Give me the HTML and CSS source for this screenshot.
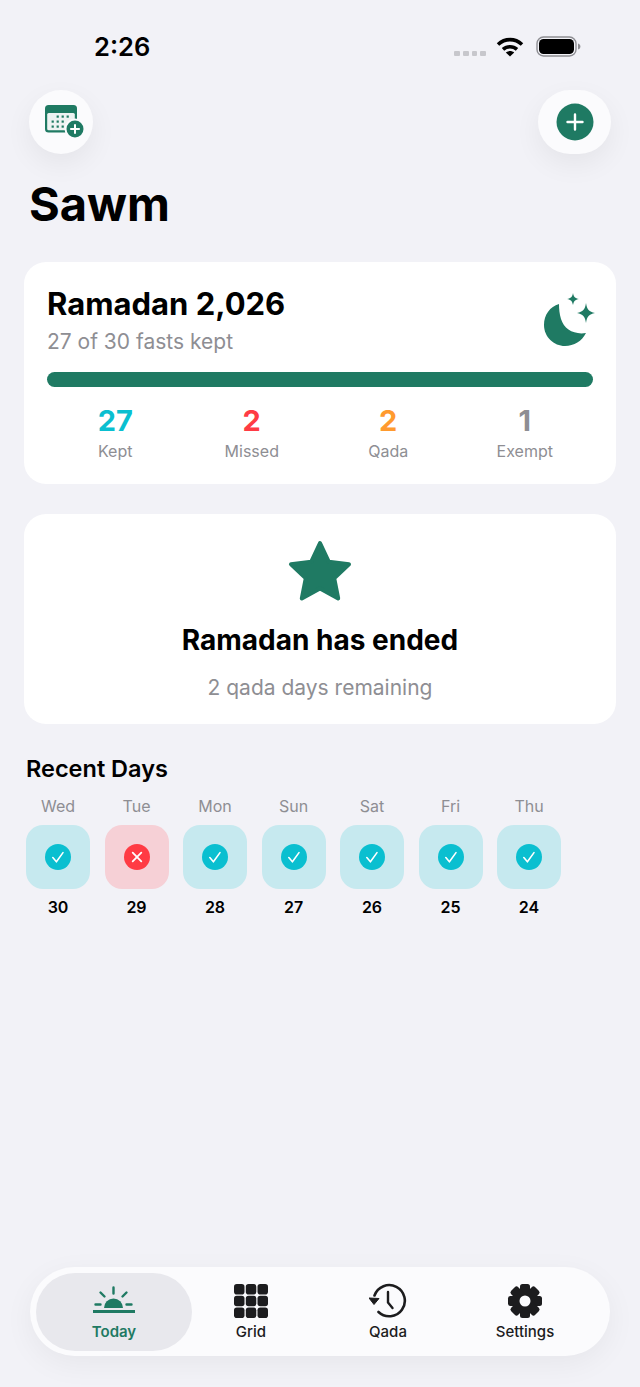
FILE: index.html
```html
<!DOCTYPE html>
<html lang="en">
<head>
  <meta charset="UTF-8" />
  <meta name="viewport" content="width=device-width, initial-scale=1.0" />
  <title>Sawm</title>
  <link rel="stylesheet" href="styles.css">
</head>
<body>
  <svg class="sprites" width="0" height="0">
    <symbol id="check" viewBox="0 0 26 26">
      <circle cx="13" cy="13" r="13" fill="#0abfd0"/>
      <path d="M7.8 13.6L11.4 17.8L18 8.6" stroke="#fff" stroke-width="1.6" fill="none" stroke-linecap="round" stroke-linejoin="round"/>
    </symbol>
    <symbol id="cross" viewBox="0 0 26 26">
      <circle cx="13" cy="13" r="13" fill="#ff3b44"/>
      <path d="M8.7 8.7L17.3 17.3M17.3 8.7L8.7 17.3" stroke="#fff" stroke-width="1.8" fill="none" stroke-linecap="round"/>
    </symbol>
  </svg>

  <div class="page">
    <div class="status-bar">
      <span class="time">2:26</span>
      <div class="status-icons">
        <div class="signal"><i></i><i></i><i></i><i></i></div>
        <svg class="wifi" width="28" height="20" viewBox="0 0 28 20">
          <path d="M2 7.5C9 1 19 1 26 7.5" fill="none" stroke="#000" stroke-width="3.6"/>
          <path d="M7 12.4C11 8.8 17 8.8 21 12.4" fill="none" stroke="#000" stroke-width="3.6"/>
          <path d="M9.8 15.4C12.4 13.4 15.6 13.4 18.2 15.4L14 19.6Z" fill="#000"/>
        </svg>
        <svg class="battery" width="45" height="21" viewBox="0 0 45 21">
          <rect x="1" y="1" width="39" height="19" rx="6.5" fill="none" stroke="#8e8e93" stroke-width="1.4"/>
          <rect x="3" y="3" width="35" height="15" rx="4.6" fill="#000"/>
          <path d="M42 7.5C43.6 8 44.4 9 44.4 10.5S43.6 13 42 13.5Z" fill="#8e8e93"/>
        </svg>
      </div>
    </div>

    <div class="top-actions">
      <button class="round-btn calendar-btn">
        <svg width="40" height="36" viewBox="0 0 40 36">
          <rect x="1" y="1" width="32" height="27.500" rx="3.5" fill="#1f7a63"/>
          <rect x="3.2" y="9" width="27.600" height="17.300" rx="1.5" fill="#eef3f2"/>
          <g fill="#1f7a63">
            <rect x="12.600" y="11.500" width="2.200" height="2.200"/><rect x="17.600" y="11.500" width="2.200" height="2.200"/><rect x="22.600" y="11.500" width="2.200" height="2.200"/>
            <rect x="7.600" y="16.500" width="2.200" height="2.200"/><rect x="12.600" y="16.500" width="2.200" height="2.200"/><rect x="17.600" y="16.500" width="2.200" height="2.200"/>
            <rect x="7.600" y="21.500" width="2.200" height="2.200"/><rect x="12.600" y="21.500" width="2.200" height="2.200"/><rect x="17.600" y="21.500" width="2.200" height="2.200"/>
          </g>
          <circle cx="31" cy="25" r="9.500" fill="#1f7a63" stroke="#fbfbfd" stroke-width="2"/>
          <path d="M31 20.200V29.800M26.200 25H35.800" stroke="#fff" stroke-width="2" fill="none"/>
        </svg>
      </button>
      <button class="round-btn add-btn">
        <svg width="38" height="38" viewBox="0 0 38 38">
          <circle cx="19" cy="19" r="18.500" fill="#1f7a63"/>
          <path d="M19 11.500V26.500M11.500 19H26.500" stroke="#fff" stroke-width="2.400" stroke-linecap="round" fill="none"/>
        </svg>
      </button>
    </div>

    <h1 class="page-title">Sawm</h1>

    <main class="content">
      <section class="card summary">
        <div class="summary-head">
          <div>
            <h2>Ramadan 2,026</h2>
            <p class="muted">27 of 30 fasts kept</p>
          </div>
          <svg class="moon" width="56" height="58" viewBox="0 0 56 58">
            <path d="M15 13C6 15.500 0 24 0 34C0 46 10 55 21 55C30 55 38 50 42 42C30 44 20 38 17 28C15.500 23 15 18 15 13Z" fill="#1f7a63"/>
            <path d="M29 2C29.800 6 31 7.300 35 8C31 8.800 29.800 10 29 14C28.200 10 27 8.800 23 8C27 7.300 28.200 6 29 2Z" fill="#1f7a63"/>
            <path d="M42 12C43 18.500 45 20.800 51 22C45 23.200 43 25.500 42 32C41 25.500 39 23.200 33 22C39 20.800 41 18.500 42 12Z" fill="#1f7a63"/>
          </svg>
        </div>
        <div class="progress"></div>
        <div class="stats">
          <div class="stat"><strong class="kept">27</strong><span>Kept</span></div>
          <div class="stat"><strong class="missed">2</strong><span>Missed</span></div>
          <div class="stat"><strong class="qada">2</strong><span>Qada</span></div>
          <div class="stat"><strong class="exempt">1</strong><span>Exempt</span></div>
        </div>
      </section>

      <section class="card ended">
        <svg width="66" height="64" viewBox="0 0 66 64">
          <path d="M33 4L41.800 22.800L62 25.200L47.200 39.200L51.200 59.500L33 49.500L14.800 59.500L18.800 39.200L4 25.200L24.200 22.800Z" fill="#1f7a63" stroke="#1f7a63" stroke-width="4" stroke-linejoin="round"/>
        </svg>
        <h2>Ramadan has ended</h2>
        <p class="muted">2 qada days remaining</p>
      </section>

      <section class="recent">
        <h3>Recent Days</h3>
        <div class="days">
          <div class="day"><span class="weekday">Wed</span><div class="tile ok"><svg width="26" height="26"><use href="#check"/></svg></div><span class="date">30</span></div>
          <div class="day"><span class="weekday">Tue</span><div class="tile bad"><svg width="26" height="26"><use href="#cross"/></svg></div><span class="date">29</span></div>
          <div class="day"><span class="weekday">Mon</span><div class="tile ok"><svg width="26" height="26"><use href="#check"/></svg></div><span class="date">28</span></div>
          <div class="day"><span class="weekday">Sun</span><div class="tile ok"><svg width="26" height="26"><use href="#check"/></svg></div><span class="date">27</span></div>
          <div class="day"><span class="weekday">Sat</span><div class="tile ok"><svg width="26" height="26"><use href="#check"/></svg></div><span class="date">26</span></div>
          <div class="day"><span class="weekday">Fri</span><div class="tile ok"><svg width="26" height="26"><use href="#check"/></svg></div><span class="date">25</span></div>
          <div class="day"><span class="weekday">Thu</span><div class="tile ok"><svg width="26" height="26"><use href="#check"/></svg></div><span class="date">24</span></div>
        </div>
      </section>
    </main>

    <nav class="tabbar">
      <div class="tab active">
        <svg width="44" height="36" viewBox="0 -3 44 36">
          <path d="M12 22A9.500 9.500 0 0 1 31 22Z" fill="#1f7a63"/>
          <path d="M1 25.500H43" stroke="#1f7a63" stroke-width="3" fill="none"/>
          <path d="M21.500 1.500V7.500M8.500 6.500L12.500 10.500M34.500 6.500L30.500 10.500M3.500 18.500H8.500M34.500 18.500H39.500" stroke="#1f7a63" stroke-width="2.400" fill="none" stroke-linecap="round"/>
        </svg>
        <span>Today</span>
      </div>
      <div class="tab">
        <svg width="34" height="36" viewBox="0 -1 34 36" fill="#1c1c1e">
          <rect x="0" y="0" width="10.500" height="10.500" rx="2.800"/><rect x="11.800" y="0" width="10.500" height="10.500" rx="2.800"/><rect x="23.500" y="0" width="10.500" height="10.500" rx="2.800"/>
          <rect x="0" y="11.800" width="10.500" height="10.500" rx="2.800"/><rect x="11.800" y="11.800" width="10.500" height="10.500" rx="2.800"/><rect x="23.500" y="11.800" width="10.500" height="10.500" rx="2.800"/>
          <rect x="0" y="23.500" width="10.500" height="10.500" rx="2.800"/><rect x="11.800" y="23.500" width="10.500" height="10.500" rx="2.800"/><rect x="23.500" y="23.500" width="10.500" height="10.500" rx="2.800"/>
        </svg>
        <span>Grid</span>
      </div>
      <div class="tab">
        <svg width="38" height="36" viewBox="1 -1 38 36">
          <path d="M6.500 11.500A15.600 15.600 0 1 1 10.500 28" fill="none" stroke="#1c1c1e" stroke-width="2.600" stroke-linecap="round"/>
          <path d="M1 14L11 14.500L6 20.500Z" fill="#1c1c1e" stroke="#1c1c1e" stroke-linejoin="round"/>
          <path d="M20 8V18.500L24.500 24" fill="none" stroke="#1c1c1e" stroke-width="2.400" stroke-linecap="round" stroke-linejoin="round"/>
        </svg>
        <span>Qada</span>
      </div>
      <div class="tab">
        <svg width="36" height="36" viewBox="0 0 36 36">
          <g fill="#1c1c1e">
            <circle cx="18" cy="18" r="13"/>
            <rect x="13" y="1" width="10" height="34" rx="2.500"/>
            <rect x="13" y="1" width="10" height="34" rx="2.500" transform="rotate(45 18 18)"/>
            <rect x="13" y="1" width="10" height="34" rx="2.500" transform="rotate(90 18 18)"/>
            <rect x="13" y="1" width="10" height="34" rx="2.500" transform="rotate(135 18 18)"/>
          </g>
          <circle cx="18" cy="18" r="5.500" fill="#fbfbfd"/>
        </svg>
        <span>Settings</span>
      </div>
    </nav>
  </div>
</body>
</html>
```

FILE: styles.css
```css
* {
  box-sizing: border-box;
}
body {
  margin: 0;
  background-color: #f2f2f7;
  font-family: Inter, "Liberation Sans", sans-serif;
  color: #000;
}
h1, h2, h3, p {
  margin: 0;
}
.sprites {
  display: block;
  height: 0;
}
.page {
  width: 640px;
  height: 1387px;
  display: flex;
  flex-direction: column;
  overflow: hidden;
}
.status-bar {
  height: 90px;
  padding: 31px 59px 0 94px;
  display: flex;
  justify-content: space-between;
  align-items: flex-start;
}
.time {
  font-size: 25.5px;
  line-height: 32px;
  font-weight: 600;
}
.status-icons {
  display: flex;
  align-items: center;
  padding-top: 5px;
}
.signal {
  display: flex;
  gap: 3px;
  margin: 14px 10px 0 0;
}
.signal i {
  width: 5.75px;
  height: 5.5px;
  border-radius: 1px;
  background: #c7c7cc;
}
.wifi {
  margin-right: 12px;
}
.top-actions {
  display: flex;
  justify-content: space-between;
  padding: 0 29px;
}
.round-btn {
  height: 64px;
  border: none;
  padding: 0;
  background: #fbfbfd;
  border-radius: 50%;
  box-shadow: 0 10px 28px rgba(0, 0, 0, 0.06);
  display: flex;
  align-items: center;
  justify-content: center;
}
.calendar-btn {
  width: 64px;
  padding: 0 0 0 6px;
}
.add-btn {
  width: 73px;
  border-radius: 32px;
}
.page-title {
  margin: 22px 0 0 29px;
  font-size: 47px;
  line-height: 56px;
  font-weight: 700;
}
.content {
  flex: 1;
  padding: 30px 24px 0;
}
.card {
  background: #fff;
  border-radius: 22px;
}
.muted {
  color: #8e8e93;
  font-size: 21px;
  line-height: 28px;
}
.summary {
  height: 222px;
  padding: 24px 23px 0;
}
.summary-head {
  display: flex;
  justify-content: space-between;
}
.summary h2 {
  font-size: 31px;
  line-height: 36px;
  font-weight: 700;
}
.summary .muted {
  margin-top: 6px;
}
.moon {
  margin: 5px -7px 0 0;
}
.progress {
  height: 15px;
  margin-top: 16px;
  border-radius: 8px;
  background: #1f7a63;
}
.stats {
  display: grid;
  grid-template-columns: repeat(4, 1fr);
  margin-top: 16px;
}
.stat {
  display: flex;
  flex-direction: column;
  align-items: center;
}
.stat strong {
  font-size: 29px;
  line-height: 36px;
  font-weight: 700;
}
.stat span {
  margin-top: 2px;
  font-size: 16px;
  line-height: 20px;
  color: #8e8e93;
}
.kept { color: #0abfd0; }
.missed { color: #ff3b44; }
.qada { color: #ff9a2e; }
.exempt { color: #8e8e93; }
.ended {
  height: 210px;
  margin-top: 30px;
  padding-top: 25px;
  display: flex;
  flex-direction: column;
  align-items: center;
}
.ended h2 {
  margin-top: 20px;
  font-size: 28px;
  line-height: 34px;
  font-weight: 700;
}
.ended .muted {
  margin-top: 17px;
}
.recent {
  margin: 30px 0 0 2px;
}
.recent h3 {
  font-size: 23.5px;
  line-height: 30px;
  font-weight: 600;
}
.days {
  display: flex;
  gap: 14.5px;
  margin-top: 12px;
}
.day {
  width: 64px;
  display: flex;
  flex-direction: column;
  align-items: center;
}
.weekday {
  font-size: 16px;
  line-height: 20px;
  color: #8e8e93;
}
.tile {
  width: 64px;
  height: 64px;
  margin-top: 9px;
  border-radius: 17px;
  display: flex;
  align-items: center;
  justify-content: center;
}
.tile.ok { background: #c6e9ef; }
.tile.bad { background: #f6d0d6; }
.date {
  margin-top: 8px;
  font-size: 16px;
  line-height: 20px;
  font-weight: 600;
}
.tabbar {
  width: 580px;
  height: 89px;
  margin: 0 0 31px 30px;
  padding: 6px 16.5px 5px 15.5px;
  display: grid;
  grid-template-columns: repeat(4, 137px);
  background: #fbfbfd;
  border-radius: 45px;
  box-shadow: 0 8px 30px rgba(0, 0, 0, 0.05);
}
.tab {
  display: flex;
  flex-direction: column;
  align-items: center;
  font-size: 15px;
  line-height: 18px;
  font-weight: 500;
  color: #1c1c1e;
}
.tab svg {
  flex: none;
  margin-top: 10px;
}
.tab span {
  margin-top: 4px;
}
.tab.active {
  margin: 0 -9.5px;
  background: #e8e8ed;
  border-radius: 39px;
  color: #1f7a63;
  font-weight: 600;
}
```
